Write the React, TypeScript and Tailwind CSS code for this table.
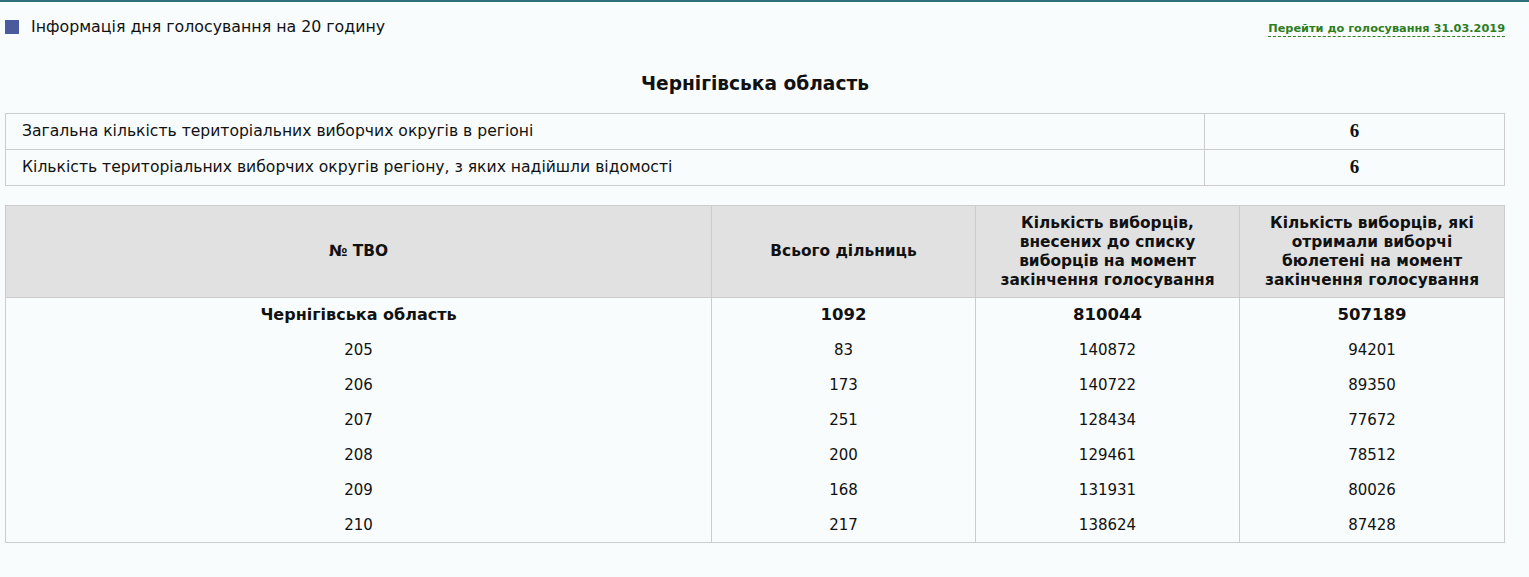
const rows = [
  { tvo: '205', total: '83', voters: '140872', got: '94201' },
  { tvo: '206', total: '173', voters: '140722', got: '89350' },
  { tvo: '207', total: '251', voters: '128434', got: '77672' },
  { tvo: '208', total: '200', voters: '129461', got: '78512' },
  { tvo: '209', total: '168', voters: '131931', got: '80026' },
  { tvo: '210', total: '217', voters: '138624', got: '87428' },
];

export default function App() {
  return (
    <div className="min-h-[577px] bg-[#f8fcfd] border-t-2 border-[#2f6f7a] text-[#111] font-['DejaVu_Sans',Verdana,sans-serif]">
      <div className="mx-[5px] w-[1500px]">
        <div className="flex items-center justify-between pt-[16px] h-[34px]">
          <div className="flex items-center">
            <span className="w-[14px] h-[14px] bg-[#4b5a9c] mr-[12px]" />
            <span className="text-[15.8px]">Інформація дня голосування на 20 годину</span>
          </div>
          <a className="text-[11.3px] font-bold text-[#2e7d1e] border-b border-dashed border-[#2e7d1e] leading-[14px] mt-[5px]">
            Перейти до голосування 31.03.2019
          </a>
        </div>

        <h1 className="text-center font-bold text-[18.6px] leading-[24px] mt-[36px] mb-[17px]">Чернігівська область</h1>

        <table className="w-full border-collapse text-[15.6px]">
          <tbody>
            <tr className="h-[36px]">
              <td className="border border-[#cccccc] pl-[16px]">Загальна кількість територіальних виборчих округів в регіоні</td>
              <td className="border border-[#cccccc] w-[300px] text-center font-bold text-[19px] font-['Liberation_Serif',serif]">6</td>
            </tr>
            <tr className="h-[36px]">
              <td className="border border-[#cccccc] pl-[16px]">Кількість територіальних виборчих округів регіону, з яких надійшли відомості</td>
              <td className="border border-[#cccccc] w-[300px] text-center font-bold text-[19px] font-['Liberation_Serif',serif]">6</td>
            </tr>
          </tbody>
        </table>

        <table className="w-full border-collapse text-[15.4px] mt-[19px] border border-[#cccccc]">
          <thead>
            <tr className="h-[92px] bg-[#e1e1e1] leading-[19px]">
              <th className="border border-[#cccccc] w-[706px] font-bold">№ ТВО</th>
              <th className="border border-[#cccccc] w-[264px] font-bold">Всього дільниць</th>
              <th className="border border-[#cccccc] w-[264px] font-bold px-[12px]">
                Кількість виборців, внесених до списку виборців на момент закінчення голосування
              </th>
              <th className="border border-[#cccccc] font-bold px-[12px]">
                Кількість виборців, які отримали виборчі бюлетені на момент закінчення голосування
              </th>
            </tr>
          </thead>
          <tbody>
            <tr className="h-[35px] font-bold text-[16px]">
              <td className="border-x border-[#cccccc] text-center">Чернігівська область</td>
              <td className="border-x border-[#cccccc] text-center text-[16.5px]">1092</td>
              <td className="border-x border-[#cccccc] text-center text-[16.5px]">810044</td>
              <td className="border-x border-[#cccccc] text-center text-[16.5px]">507189</td>
            </tr>
            {rows.map((r) => (
              <tr key={r.tvo} className="h-[35px] text-[15px]">
                <td className="border-x border-[#cccccc] text-center">{r.tvo}</td>
                <td className="border-x border-[#cccccc] text-center">{r.total}</td>
                <td className="border-x border-[#cccccc] text-center">{r.voters}</td>
                <td className="border-x border-[#cccccc] text-center">{r.got}</td>
              </tr>
            ))}
          </tbody>
        </table>
      </div>
    </div>
  );
}
